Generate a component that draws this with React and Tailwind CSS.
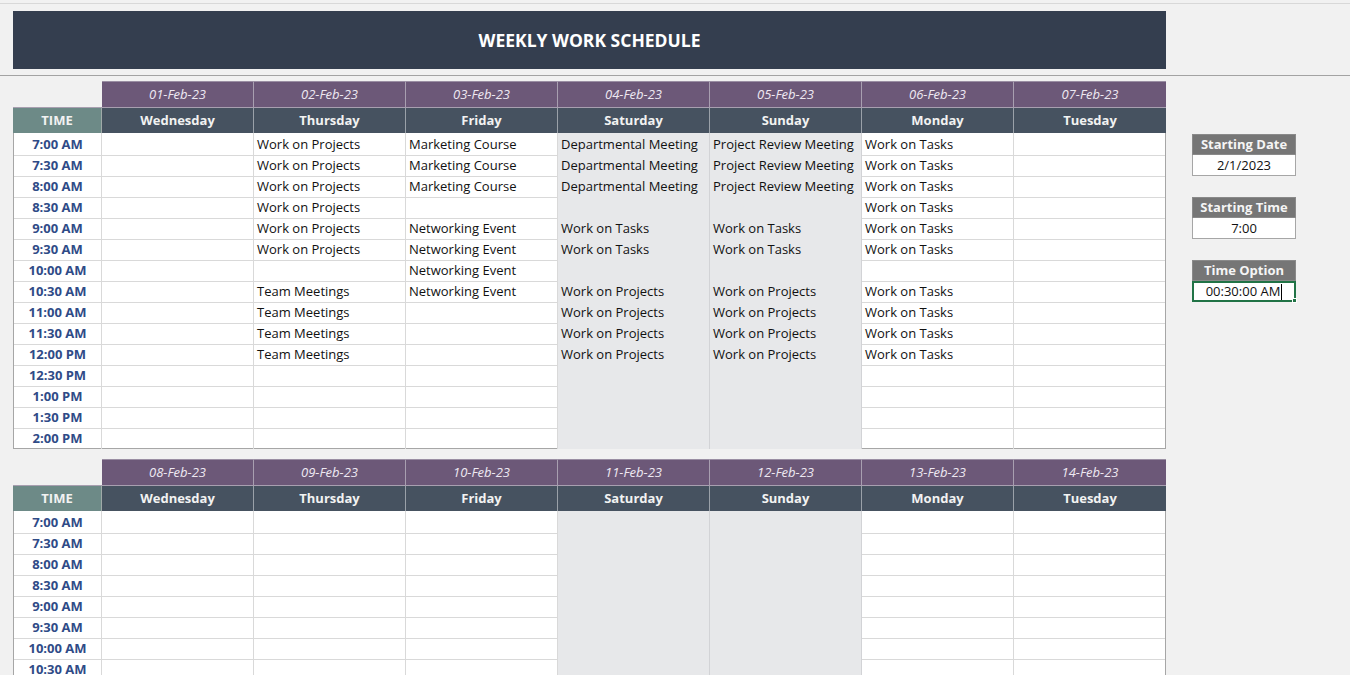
import React from "react";

const DAYS = ["Wednesday", "Thursday", "Friday", "Saturday", "Sunday", "Monday", "Tuesday"];
const TIMES = [
  "7:00 AM", "7:30 AM", "8:00 AM", "8:30 AM", "9:00 AM", "9:30 AM", "10:00 AM", "10:30 AM",
  "11:00 AM", "11:30 AM", "12:00 PM", "12:30 PM", "1:00 PM", "1:30 PM", "2:00 PM",
];

const WP = "Work on Projects";
const MC = "Marketing Course";
const DM = "Departmental Meeting";
const PR = "Project Review Meeting";
const WT = "Work on Tasks";
const NE = "Networking Event";
const TM = "Team Meetings";

const WEEK1 = [
  ["", WP, MC, DM, PR, WT, ""],
  ["", WP, MC, DM, PR, WT, ""],
  ["", WP, MC, DM, PR, WT, ""],
  ["", WP, "", "", "", WT, ""],
  ["", WP, NE, WT, WT, WT, ""],
  ["", WP, NE, WT, WT, WT, ""],
  ["", "", NE, "", "", "", ""],
  ["", TM, NE, WP, WP, WT, ""],
  ["", TM, "", WP, WP, WT, ""],
  ["", TM, "", WP, WP, WT, ""],
  ["", TM, "", WP, WP, WT, ""],
  ["", "", "", "", "", "", ""],
  ["", "", "", "", "", "", ""],
  ["", "", "", "", "", "", ""],
  ["", "", "", "", "", "", ""],
];

const EMPTY = TIMES.map(() => ["", "", "", "", "", "", ""]);

function Schedule({ dates, data }) {
  return (
    <div className="w-[1153px]">
      {/* date row */}
      <div className="grid grid-cols-[89px_repeat(7,152px)] h-[26px]">
        <div />
        {dates.map((d, i) => (
          <div
            key={d}
            className={`flex items-center justify-center pt-[1px] bg-[#6c5878] text-[13px] italic text-[#eee8f2] border-t border-[#9a8ea3] ${i < 6 ? "border-r border-r-[#a89fb0]" : ""}`}
          >
            {d}
          </div>
        ))}
      </div>
      {/* day row */}
      <div className="grid grid-cols-[89px_repeat(7,152px)] h-[26px] border-t border-[#a89fb0]">
        <div className="flex items-center justify-center pt-[1px] bg-[#6d8a87] text-[13px] font-bold text-[#f2f2f2] border-r border-[#a0aaa8]">
          TIME
        </div>
        {DAYS.map((d, i) => (
          <div
            key={d}
            className={`flex items-center justify-center pt-[1px] bg-[#465260] text-[13px] font-bold text-[#f2f2f2] ${i < 6 ? "border-r border-[#9aa1a9]" : ""}`}
          >
            {d}
          </div>
        ))}
      </div>
      {/* body */}
      <div className="border-l border-r border-b border-[#a6a6a6] bg-white">
        {TIMES.map((t, r) => (
          <div key={t} className="grid grid-cols-[88px_repeat(6,152px)_151px] h-[21px]">
            <div className={`flex items-center justify-center pt-[2px] border-r border-[#d9d9d9] text-[13px] font-bold text-[#2f4b87] ${r < TIMES.length - 1 ? "border-b" : ""}`}>
              {t}
            </div>
            {data[r].map((c, i) => {
              const weekend = i === 3 || i === 4;
              return (
                <div
                  key={i}
                  className={`flex items-center pl-[3px] pt-[2px] whitespace-nowrap overflow-hidden text-[13px] text-[#111] ${weekend ? "bg-[#e7e8ea] border-[#d2d3d6]" : "border-[#d9d9d9]"} ${i < 6 ? "border-r" : ""} ${r < TIMES.length - 1 ? "border-b" : ""}`}
                >
                  {c}
                </div>
              );
            })}
          </div>
        ))}
      </div>
    </div>
  );
}

function Field({ label, value, active }) {
  return (
    <div className="w-[104px]">
      <div className="h-[21px] flex items-center justify-center pt-[1px] bg-[#767676] text-[13px] font-bold text-[#f5f5f5] border border-[#8a8a8a]">
        {label}
      </div>
      {active ? (
        <div className="relative h-[21px] flex items-center justify-center bg-white border-2 border-[#217346] text-[13px] text-[#111]">
          <span>{value}</span>
          <span className="ml-[1px] inline-block w-px h-[16px] bg-black" />
          <span className="absolute -right-[3px] -bottom-[3px] w-[5px] h-[5px] bg-[#217346] border border-white" />
        </div>
      ) : (
        <div className="h-[21px] flex items-center justify-center pt-[1px] bg-white border border-t-0 border-[#a6a6a6] text-[13px] text-[#111]">
          {value}
        </div>
      )}
    </div>
  );
}

export default function App() {
  return (
    <div
      className="w-[1350px] h-[675px] overflow-hidden bg-[#f1f1f1]"
      style={{ fontFamily: '"Open Sans", "Liberation Sans", sans-serif' }}
    >
      <div className="h-[4px] border-b border-[#d8d8d8]" />
      <div className="mt-[7px] ml-[13px] w-[1153px] h-[58px] bg-[#343e4f] flex items-center justify-center">
        <span className="text-[17.5px] font-bold text-white">WEEKLY WORK SCHEDULE</span>
      </div>
      <div className="mt-[6px] h-px bg-[#a3a3a3]" />
      <div className="flex mt-[5px]">
        <div className="ml-[13px] flex flex-col gap-[10px]">
          <Schedule
            dates={["01-Feb-23", "02-Feb-23", "03-Feb-23", "04-Feb-23", "05-Feb-23", "06-Feb-23", "07-Feb-23"]}
            data={WEEK1}
          />
          <Schedule
            dates={["08-Feb-23", "09-Feb-23", "10-Feb-23", "11-Feb-23", "12-Feb-23", "13-Feb-23", "14-Feb-23"]}
            data={EMPTY}
          />
        </div>
        <div className="ml-[26px] pt-[53px] flex flex-col gap-[21px]">
          <Field label="Starting Date" value="2/1/2023" />
          <Field label="Starting Time" value="7:00" />
          <Field label="Time Option" value="00:30:00 AM" active />
        </div>
      </div>
    </div>
  );
}
